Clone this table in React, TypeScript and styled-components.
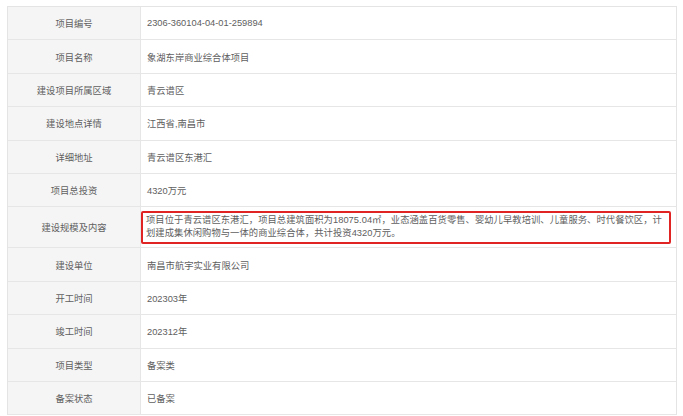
import React from "react";
import styled, { createGlobalStyle } from "styled-components";

const GlobalStyle = createGlobalStyle`
  html, body { margin: 0; padding: 0; background: #ffffff; }
  body {
    font-family: "Liberation Sans", "Noto Sans CJK SC", sans-serif;
    color: #606060;
  }
`;

const Page = styled.div`
  padding: 6px 0 0 7px;
`;

const Table = styled.div`
  width: 670px;
  border: 1px solid #e4e4e4;
  border-bottom: none;
  box-sizing: border-box;
`;

const Row = styled.div<{ $tall?: boolean }>`
  display: grid;
  grid-template-columns: 133px 1fr;
  height: ${(p) => (p.$tall ? "41px" : "33.4px")};
  border-bottom: 1px solid #e6e6e6;
  box-sizing: border-box;
`;

const Label = styled.div`
  background: #f5f5f5;
  border-right: 1px solid #e6e6e6;
  display: flex;
  align-items: center;
  justify-content: center;
  font-size: 9.3px;
  color: #606060;
`;

const Value = styled.div`
  display: flex;
  align-items: center;
  padding-left: 6px;
  font-size: 9.3px;
  color: #606060;
`;

const HighlightCell = styled.div`
  display: flex;
  align-items: center;
  padding: 0 5px 0 0;
`;

const Highlight = styled.div`
  flex: 1;
  border: 2px solid #e02424;
  border-radius: 2px;
  padding: 1.5px 3px;
  font-size: 9.3px;
  line-height: 13px;
  color: #606060;
`;

const Line = styled.span`
  display: block;
  white-space: nowrap;
  letter-spacing: 0.05px;
`;

const rows: [string, string][] = [
  ["项目编号", "2306-360104-04-01-259894"],
  ["项目名称", "象湖东岸商业综合体项目"],
  ["建设项目所属区域", "青云谱区"],
  ["建设地点详情", "江西省,南昌市"],
  ["详细地址", "青云谱区东港汇"],
  ["项目总投资", "4320万元"],
];

const rowsAfter: [string, string][] = [
  ["建设单位", "南昌市航宇实业有限公司"],
  ["开工时间", "202303年"],
  ["竣工时间", "202312年"],
  ["项目类型", "备案类"],
  ["备案状态", "已备案"],
];

export default function App() {
  return (
    <>
      <GlobalStyle />
      <Page>
        <Table>
          {rows.map(([k, v]) => (
            <Row key={k}>
              <Label>{k}</Label>
              <Value>{v}</Value>
            </Row>
          ))}
          <Row $tall>
            <Label>建设规模及内容</Label>
            <HighlightCell>
              <Highlight>
                <Line>
                  项目位于青云谱区东港汇，项目总建筑面积为18075.04㎡，业态涵盖百货零售、婴幼儿早教培训、儿童服务、时代餐饮区，计
                </Line>
                <Line>划建成集休闲购物与一体的商业综合体，共计投资4320万元。</Line>
              </Highlight>
            </HighlightCell>
          </Row>
          {rowsAfter.map(([k, v]) => (
            <Row key={k}>
              <Label>{k}</Label>
              <Value>{v}</Value>
            </Row>
          ))}
        </Table>
      </Page>
    </>
  );
}
